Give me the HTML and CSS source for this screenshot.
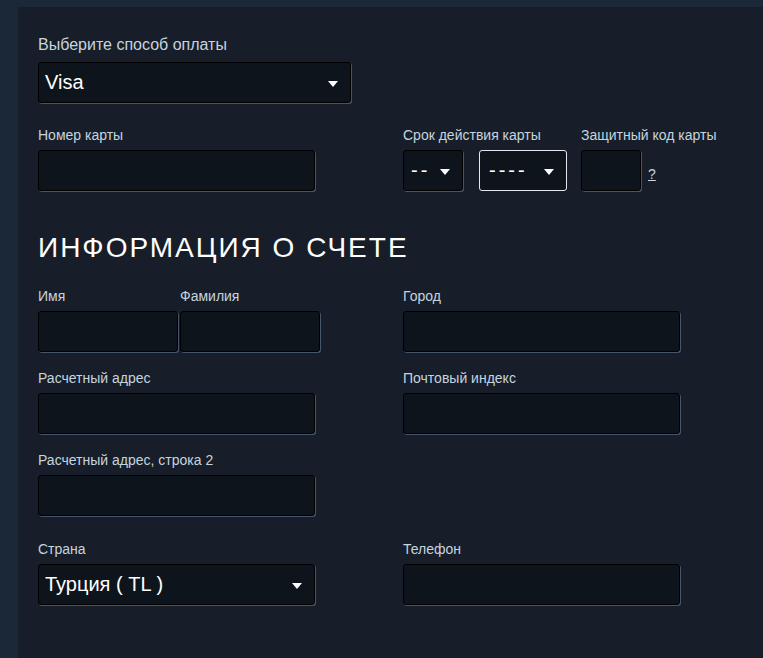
FILE: index.html
```html
<!DOCTYPE html>
<html lang="ru">
<head>
    <meta charset="UTF-8">
    <meta name="viewport" content="width=device-width, initial-scale=1.0">
    <title>Оплата</title>
    <link rel="stylesheet" href="styles.css">
</head>
<body>
    <div class="panel">
        <div class="method">
            <label class="method-label">Выберите способ оплаты</label>
            <div class="dselect method-select">
                <span class="dselect-text">Visa</span>
                <span class="arrow"></span>
            </div>
        </div>

        <div class="card-row">
            <div class="field card-number">
                <label class="input-label">Номер карты</label>
                <div class="text-input"></div>
            </div>
            <div class="field expiry">
                <label class="input-label">Срок действия карты</label>
                <div class="expiry-selects">
                    <div class="dselect month-select">
                        <span class="dselect-text dashes">--</span>
                        <span class="arrow"></span>
                    </div>
                    <div class="dselect year-select focused">
                        <span class="dselect-text dashes">----</span>
                        <span class="arrow"></span>
                    </div>
                </div>
            </div>
            <div class="field cvv">
                <label class="input-label">Защитный код карты</label>
                <div class="cvv-line">
                    <div class="text-input cvv-input"></div>
                    <a href="#" class="help">?</a>
                </div>
            </div>
        </div>

        <h2 class="section-title">ИНФОРМАЦИЯ О СЧЕТЕ</h2>

        <div class="billing">
            <div class="name-pair">
                <div class="field">
                    <label class="input-label">Имя</label>
                    <div class="text-input"></div>
                </div>
                <div class="field">
                    <label class="input-label">Фамилия</label>
                    <div class="text-input"></div>
                </div>
            </div>
            <div class="field">
                <label class="input-label">Город</label>
                <div class="text-input"></div>
            </div>

            <div class="field">
                <label class="input-label">Расчетный адрес</label>
                <div class="text-input"></div>
            </div>
            <div class="field">
                <label class="input-label">Почтовый индекс</label>
                <div class="text-input"></div>
            </div>

            <div class="field">
                <label class="input-label">Расчетный адрес, строка 2</label>
                <div class="text-input"></div>
            </div>
            <div></div>

            <div class="field last-row">
                <label class="input-label">Страна</label>
                <div class="dselect">
                    <span class="dselect-text">Турция ( TL )</span>
                    <span class="arrow"></span>
                </div>
            </div>
            <div class="field last-row">
                <label class="input-label">Телефон</label>
                <div class="text-input"></div>
            </div>
        </div>
    </div>
</body>
</html>
```

FILE: styles.css
```css
:root {
    --page-bg: #1b2838;
    --panel-bg: #171e2a;
    --input-bg: #0e141b;
    --label-color: #c6d4df;
    --font-family: "Liberation Sans", Arial, sans-serif;
}

body {
    margin: 0;
    background: var(--page-bg);
    font-family: var(--font-family);
    overflow: hidden;
}

.panel {
    box-sizing: border-box;
    height: calc(100vh - 7px);
    margin: 7px 0 0 18px;
    padding: 29px 20px 0 20px;
    background: var(--panel-bg);
}

.method-label {
    display: block;
    font-size: 16px;
    line-height: 18px;
    color: var(--label-color);
    margin-bottom: 8px;
}

.input-label {
    display: block;
    font-size: 14px;
    line-height: 16px;
    color: var(--label-color);
    margin-bottom: 7px;
    white-space: nowrap;
}

.text-input,
.dselect {
    box-sizing: border-box;
    height: 41px;
    width: 277px;
    background: var(--input-bg);
    border: 1px solid #000;
    border-radius: 3px;
    box-shadow: 1px 1px 0 #45556c;
}

.dselect {
    display: flex;
    align-items: center;
    justify-content: space-between;
    padding: 0 12px 0 6px;
    color: #fff;
}

.dselect-text {
    font-size: 20px;
    white-space: nowrap;
}

.dashes {
    letter-spacing: 3px;
}

.arrow {
    width: 0;
    height: 0;
    margin-top: 3px;
    border-left: 5.5px solid transparent;
    border-right: 5.5px solid transparent;
    border-top: 6px solid #fff;
}

.method-select {
    width: 313px;
}

.card-row {
    display: flex;
    margin-top: 24px;
}

.expiry {
    margin-left: 88px;
}

.expiry-selects {
    display: flex;
    gap: 16px;
}

.month-select {
    width: 60px;
    padding-left: 7px;
}

.year-select {
    width: 88px;
    padding-left: 9px;
}

.focused {
    border-color: #e4e8ec;
    box-shadow: none;
}

.cvv {
    margin-left: 14px;
}

.cvv-line {
    display: flex;
    align-items: center;
}

.cvv-input {
    width: 60px;
}

.help {
    margin: 6px 0 0 7px;
    font-size: 14px;
    color: var(--label-color);
    text-decoration: underline;
}

.section-title {
    margin: 41px 0 24px 0;
    font-size: 28px;
    line-height: 32px;
    font-weight: normal;
    letter-spacing: 2px;
    color: #fff;
}

.billing {
    display: grid;
    grid-template-columns: 277px 277px;
    column-gap: 88px;
    row-gap: 18px;
}

.name-pair {
    display: grid;
    grid-template-columns: 140px 140px;
    column-gap: 2px;
}

.name-pair .text-input {
    width: 140px;
}

.last-row {
    margin-top: 7px;
}
```
